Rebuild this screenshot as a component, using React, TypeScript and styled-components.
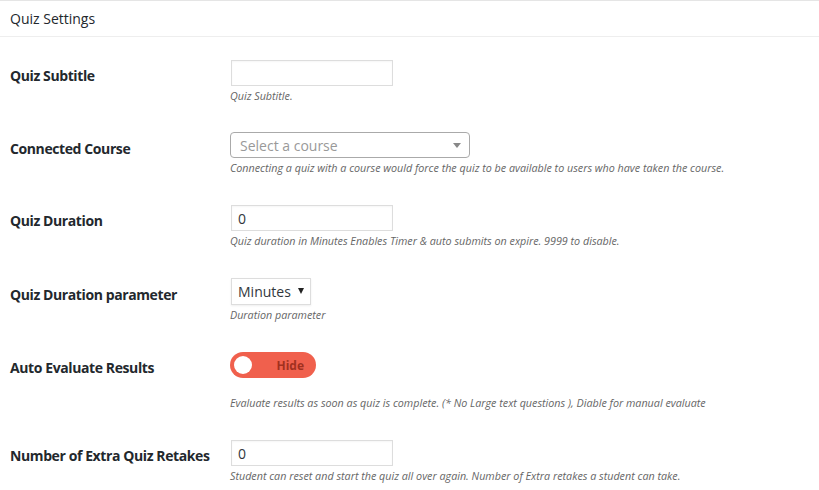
import styled, { createGlobalStyle } from "styled-components"

const GlobalStyle = createGlobalStyle`
  * { box-sizing: border-box; }
  body {
    margin: 0;
    background: #fff;
    font-family: "Open Sans", "Noto Sans", sans-serif;
    color: #23282d;
  }
`

const Panel = styled.div`
  width: 819px;
  min-height: 490px;
  background: #fff;
  border-top: 1px solid #e5e5e5;
`

const PanelHeader = styled.h2`
  margin: 0;
  height: 36px;
  padding: 0 10px;
  display: flex;
  align-items: center;
  font-size: 14px;
  font-weight: 400;
  color: #23282d;
  border-bottom: 1px solid #eee;
`

const Body = styled.div`
  padding-top: 8px;
`

const Row = styled.div`
  display: grid;
  grid-template-columns: 220px 1fr;
  padding: 15px 0 15px 10px;
`

const Label = styled.label<{ $h?: number }>`
  padding-top: 3px;
  font-size: 14px;
  font-weight: 700;
  color: #23282d;
  line-height: ${p => p.$h ?? 26}px;
  letter-spacing: -0.4px;
`

const Field = styled.div`
  display: flex;
  flex-direction: column;
  align-items: flex-start;
`

const TextInput = styled.input`
  width: 162px;
  height: 26px;
  margin: 0 0 0 1px;
  padding: 0 6px;
  border: 1px solid #ddd;
  box-shadow: inset 0 1px 2px rgba(0, 0, 0, 0.04);
  font: 14px "Open Sans", sans-serif;
  color: #32373c;
  outline: none;
`

const Combo = styled.div`
  position: relative;
  width: 240px;
  height: 26px;
  margin-top: -1px;
  border: 1px solid #aaa;
  border-radius: 4px;
  display: flex;
  align-items: center;
  padding-left: 9px;
  font-size: 14px;
  color: #999;
`

const ComboArrow = styled.span`
  position: absolute;
  right: 8px;
  top: 10px;
  border-style: solid;
  border-width: 5px 4px 0 4px;
  border-color: #888 transparent transparent transparent;
`

const Dropdown = styled.div`
  width: 80px;
  height: 27px;
  margin-left: 1px;
  border: 1px solid #ddd;
  display: flex;
  align-items: center;
  justify-content: space-between;
  padding: 0 6px 0 6px;
  font-size: 14px;
  color: #32373c;
  box-shadow: 0 1px 2px rgba(0, 0, 0, 0.07);
`

const DropArrow = styled.span`
  border-style: solid;
  border-width: 6px 3.5px 0 3.5px;
  border-color: #222 transparent transparent transparent;
  margin-top: -2px;
`

const Toggle = styled.div`
  width: 86px;
  height: 26px;
  border-radius: 13px;
  background: #f0604d;
  display: flex;
  align-items: center;
  padding: 0 12px 0 4px;
  justify-content: space-between;
`

const Knob = styled.span`
  width: 18px;
  height: 18px;
  border-radius: 50%;
  background: #fff;
`

const ToggleText = styled.span`
  font-size: 12px;
  font-weight: 700;
  color: #a2301f;
`

const Desc = styled.p<{ $gap?: number }>`
  margin: ${p => p.$gap ?? 3}px 0 0;
  font-size: 10.75px;
  line-height: 14px;
  font-style: italic;
  color: #666;
`

export default function App() {
  return (
    <>
      <GlobalStyle />
      <Panel>
        <PanelHeader>Quiz Settings</PanelHeader>
        <Body>
          <Row>
            <Label>Quiz Subtitle</Label>
            <Field>
              <TextInput defaultValue="" />
              <Desc>Quiz Subtitle.</Desc>
            </Field>
          </Row>
          <Row>
            <Label>Connected Course</Label>
            <Field>
              <Combo>
                Select a course
                <ComboArrow />
              </Combo>
              <Desc $gap={3}>
                Connecting a quiz with a course would force the quiz to be available to users who have taken the course.
              </Desc>
            </Field>
          </Row>
          <Row>
            <Label>Quiz Duration</Label>
            <Field>
              <TextInput defaultValue="0" />
              <Desc>Quiz duration in Minutes Enables Timer &amp; auto submits on expire. 9999 to disable.</Desc>
            </Field>
          </Row>
          <Row>
            <Label $h={27}>Quiz Duration parameter</Label>
            <Field>
              <Dropdown>
                Minutes
                <DropArrow />
              </Dropdown>
              <Desc $gap={3}>Duration parameter</Desc>
            </Field>
          </Row>
          <Row>
            <Label>Auto Evaluate Results</Label>
            <Field>
              <Toggle>
                <Knob />
                <ToggleText>Hide</ToggleText>
              </Toggle>
              <Desc $gap={18}>
                Evaluate results as soon as quiz is complete. (* No Large text questions ), Diable for manual evaluate
              </Desc>
            </Field>
          </Row>
          <Row>
            <Label>Number of Extra Quiz Retakes</Label>
            <Field>
              <TextInput defaultValue="0" />
              <Desc>
                Student can reset and start the quiz all over again. Number of Extra retakes a student can take.
              </Desc>
            </Field>
          </Row>
        </Body>
      </Panel>
    </>
  )
}
